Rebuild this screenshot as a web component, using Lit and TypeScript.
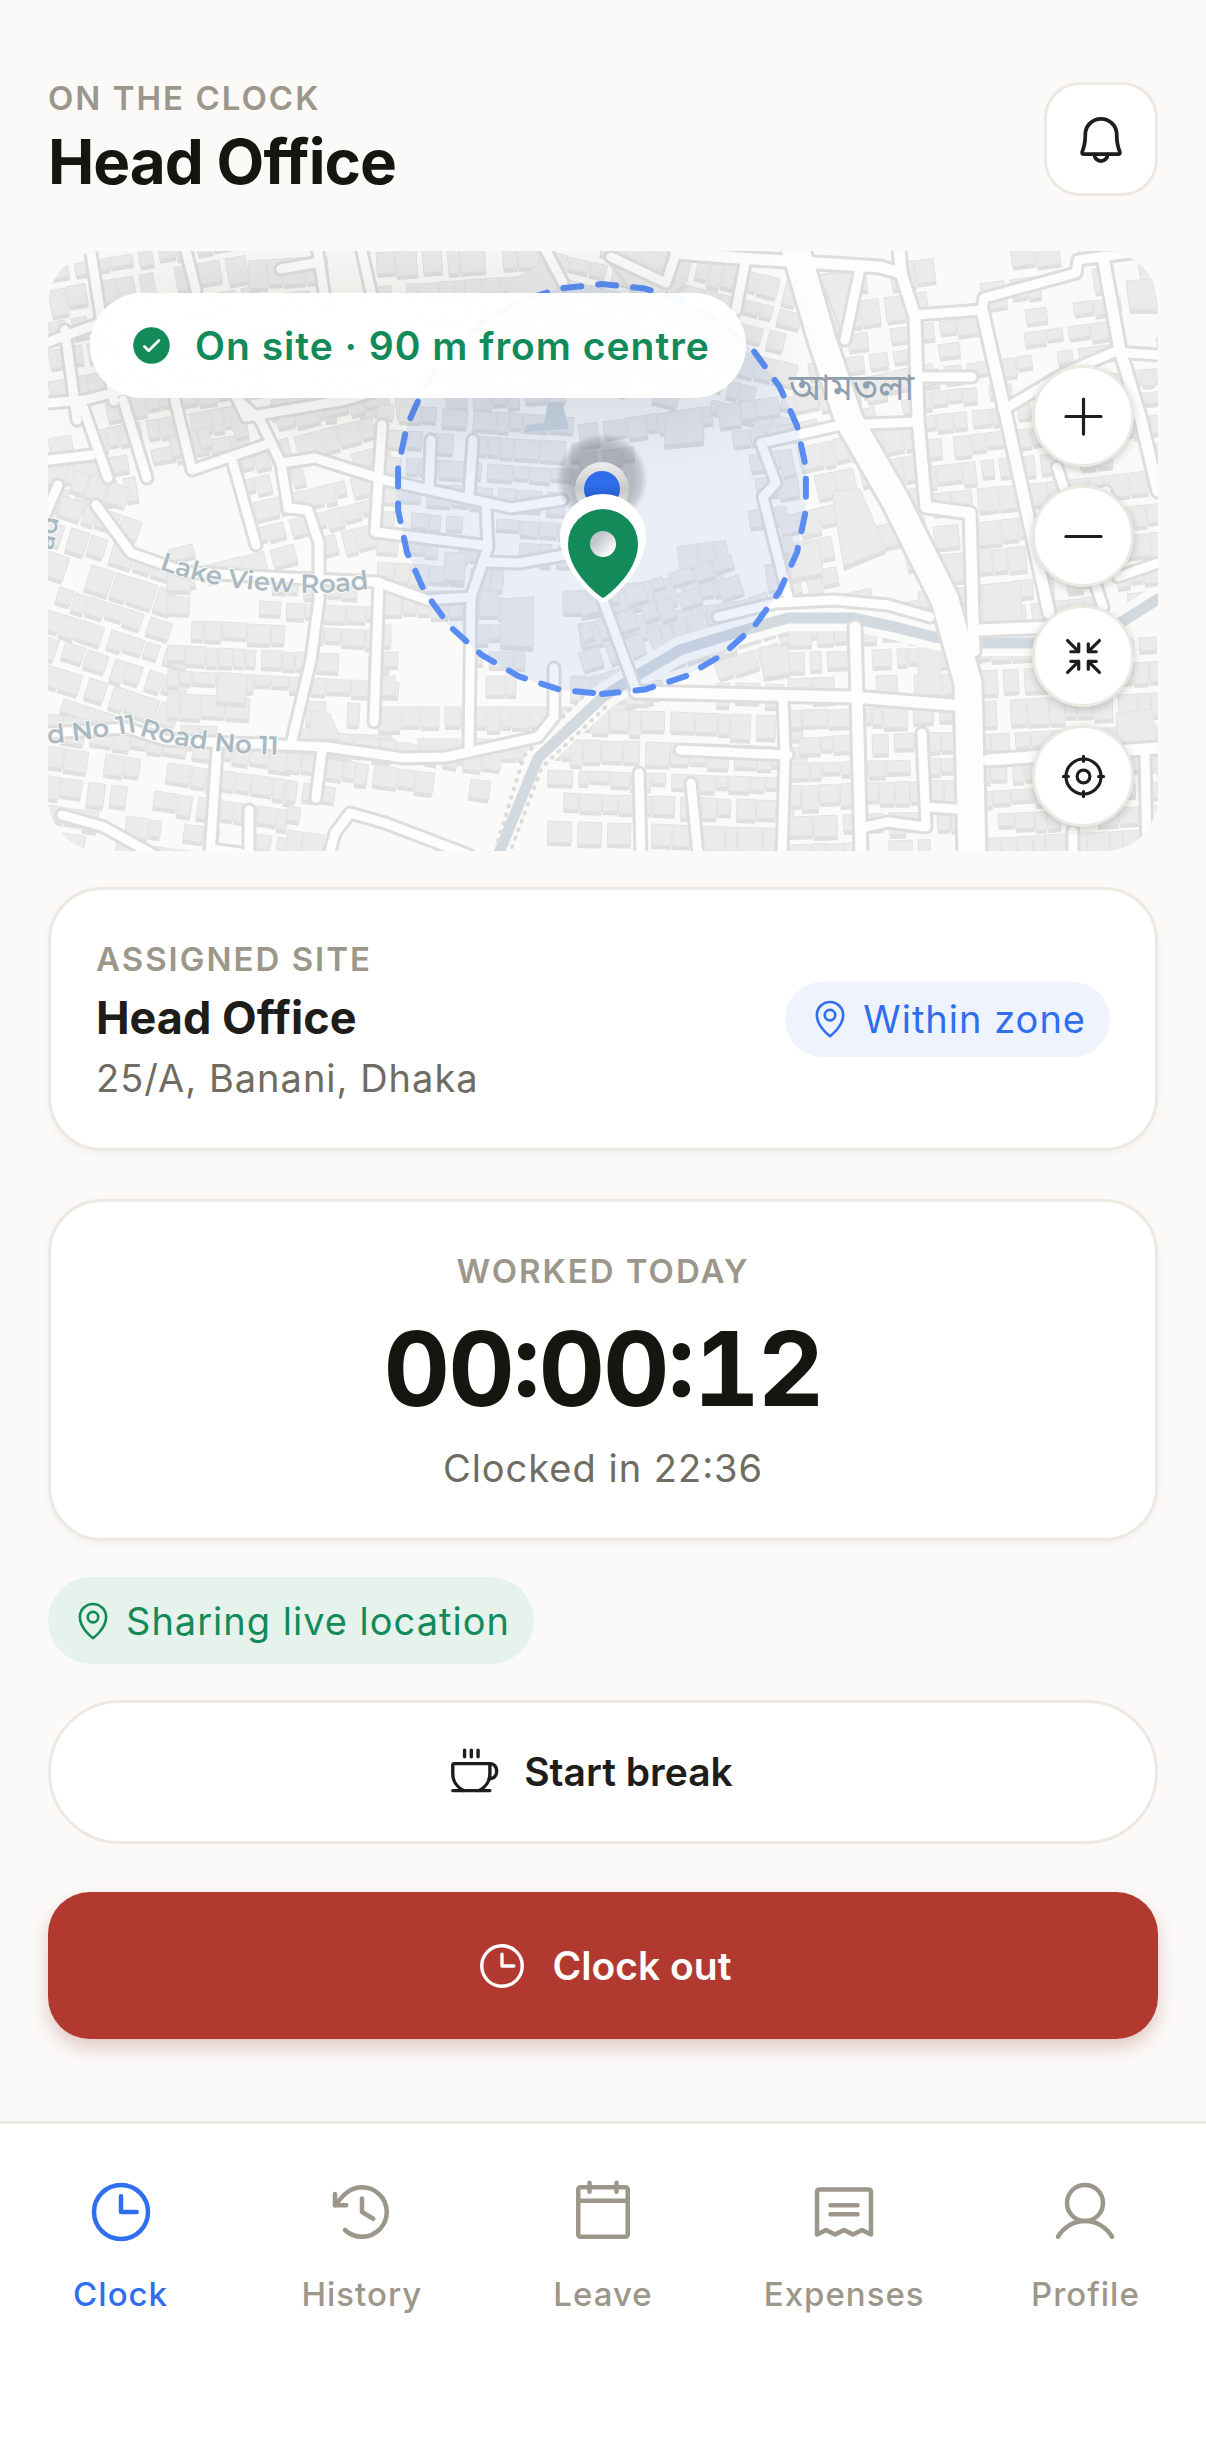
import { LitElement, html, css, svg, nothing } from 'lit'
import { customElement, property, state } from 'lit/decorators.js'
import { classMap } from 'lit/directives/class-map.js'

type IconName =
  | 'bell'
  | 'check'
  | 'plus'
  | 'minus'
  | 'arrows-in'
  | 'target'
  | 'pin'
  | 'cup'
  | 'clock'
  | 'history'
  | 'calendar'
  | 'receipt'
  | 'user'

// All glyphs are drawn on a 256 grid with a 16 unit stroke.
const ICONS: Record<IconName, unknown> = {
  bell: svg`
    <path d="M48 182 C55 166 61 146 61 109 A67 67 0 0 1 195 109 C195 146 201 166 208 182 Q211 193 201 193 H55 Q45 193 48 182 Z" />
    <path d="M100 194 a28 28 0 0 0 56 0" />
  `,
  check: svg`
    <circle cx="128" cy="128" r="104" fill="currentColor" stroke="none" />
    <path d="M88 134 L112 158 L170 100" stroke="#fff" />
  `,
  plus: svg`<path d="M40 128 H216 M128 40 V216" />`,
  minus: svg`<path d="M40 128 H216" />`,
  'arrows-in': svg`
    <path d="M192 104 H152 V64 M208 48 L152 104" />
    <path d="M64 152 H104 V192 M48 208 L104 152" />
    <path d="M152 192 V152 H192 M208 208 L152 152" />
    <path d="M104 64 V104 H64 M48 48 L104 104" />
  `,
  target: svg`
    <circle cx="128" cy="128" r="88" />
    <circle cx="128" cy="128" r="32" />
    <path d="M128 27 V52 M128 204 V229 M27 128 H52 M204 128 H229" />
  `,
  pin: svg`
    <circle cx="128" cy="104" r="32" />
    <path d="M208 104 C208 176 128 232 128 232 S48 176 48 104 a80 80 0 0 1 160 0 Z" />
  `,
  cup: svg`
    <path d="M88 24 V56 M120 24 V56 M152 24 V56 M32 216 H208" />
    <path d="M83.3 216 A88.2 88.2 0 0 1 32 136 V96 a8 8 0 0 1 8 -8 H208 V136 a88.2 88.2 0 0 1 -51.3 80" />
    <path d="M208 88 a32 32 0 0 1 32 32 v8 a32 32 0 0 1 -32 32 h-3.4" />
  `,
  clock: svg`
    <circle cx="128" cy="128" r="96" />
    <path d="M128 72 V128 H184" />
  `,
  history: svg`
    <path d="M128 80 V128 L168 152" />
    <path d="M72 104 H32 V64" />
    <path d="M67.6 192 A88 88 0 1 0 65.8 65.8 C54 77.7 44.3 88.9 32 104" />
  `,
  calendar: svg`
    <rect x="40" y="40" width="176" height="176" rx="8" />
    <path d="M176 24 V56 M80 24 V56 M40 88 H216" />
  `,
  receipt: svg`
    <path d="M80 104 H176 M80 136 H176" />
    <path d="M32 208 V56 a8 8 0 0 1 8 -8 H216 a8 8 0 0 1 8 8 V208 l-32 -16 -32 16 -32 -16 -32 16 -32 -16 Z" />
  `,
  user: svg`
    <circle cx="128" cy="96" r="64" />
    <path d="M32 216 C51.4 182.5 86.6 160 128 160 s76.6 22.5 96 56" />
  `,
}

@customElement('app-icon')
export class AppIcon extends LitElement {
  static override styles = css`
    :host {
      display: inline-flex;
      flex: none;
      width: 72px;
      height: 72px;
    }

    svg {
      width: 100%;
      height: 100%;
      fill: none;
      stroke: currentColor;
      stroke-width: 16;
      stroke-linecap: round;
      stroke-linejoin: round;
    }
  `

  @property() name: IconName = 'clock'

  override render() {
    return html`<svg viewBox="0 0 256 256" aria-hidden="true">${ICONS[this.name]}</svg>`
  }
}

const MAP_W = 1110
const MAP_H = 600

// Street centre lines, grouped by carriageway width.
const STREETS: Record<number, string[]> = {
  9: [
    '42,-4 53,66 66,150', '35,156 60,227', '17,79 29,169', '0,91 52,72', '0,152 37,149 110,130 210,112',
    '137,-4 148,39', '269,-4 279,60', '233,18 272,11', '313,-4 325,50', '496,-4 515,32',
    '75,149 99,227', '127,149 144,219 217,194', '190,149 198,166 298,149 380,124',
    '160,100 190,149 212,169 233,212 240,257 260,259 271,292 271,349 263,409 244,489',
    '185,212 208,294', '233,212 267,207 337,229 463,257 514,249', '334,174 327,281 433,294',
    '383,189 381,237', '425,189 421,245', '438,256 440,296 423,346 421,496', '437,311 471,312 517,304',
    '48,254 83,302 137,321 221,326 329,331 379,349 423,346', '331,331 326,471',
    '0,482 79,477 117,489 279,496 356,507 398,506 490,486 506,466 506,417',
    '169,499 162,604', '274,499 268,547', '201,559 201,604', '14,564 56,576 106,604', '162,598 192,602',
    '281,604 287,582 302,562 337,572 421,604', '0,209 44,204', '10,234 -2,262',
    '628,2 618,32 563,6', '697,12 688,59', '811,22 797,89',
    '868,64 934,59 936,47 1028,22 1030,9 1082,2 1110,2', '870,126 924,126',
    '955,159 1017,122 1066,101 1110,104', '793,174 713,192 728,232 715,246 740,346',
    '793,174 870,171', '670,366 728,352 786,349 840,354 882,366', '555,349 588,439',
    '735,449 737,502 734,604', '632,499 740,504', '591,522 593,604', '643,532 650,604',
    '874,482 878,576 840,571 817,576', '878,556 910,558', '1009,216 1055,356', '1070,326 1110,312',
    '1097,502 1099,604', '1025,580 1025,604', '1000,270 1015,252 1058,240 1064,260',
  ],
  11: [
    '628,2 690,7 832,16 853,22', '851,-4 853,22 867,66 870,169 878,256 922,262 926,400',
    '934,59 959,169 1001,362', '1055,6 1072,99 1093,169 1110,240', '588,441 805,446 905,454',
    '807,376 809,446 813,604', '932,379 1001,376', '940,509 1110,497',
  ],
  27: ['747,-4 774,89 801,169 847,249 897,349 920,432 924,604'],
}

const RIVER = '446,614 490,507 555,446 593,422 632,399 697,379 740,367 805,367 847,376 886,386 932,392 985,392 1072,372 1110,348'

// Unbuilt ground: x, y, width, height.
const OPEN_GROUND = [
  [100, 226, 84, 70], [150, 332, 60, 34], [216, 450, 26, 40], [290, 545, 120, 60], [356, 385, 60, 44],
  [280, 20, 34, 50], [590, 200, 110, 90], [620, 440, 30, 16], [478, 370, 44, 60], [470, 330, 40, 40],
  [936, 66, 30, 40], [890, 20, 34, 44], [1000, 40, 24, 30], [790, 300, 60, 40], [420, 555, 30, 45],
  [900, 0, 60, 20], [980, 120, 30, 30], [1080, 40, 24, 60], [560, 255, 50, 60], [690, 290, 24, 40],
]

const DISTRICTS = [
  [0, 0, 200, 230, -10], [200, 0, 300, 160, -4], [500, 0, 240, 160, 14], [760, 0, 350, 130, -8],
  [0, 230, 120, 250, 18], [120, 160, 210, 160, -14], [330, 160, 200, 190, 4], [530, 160, 200, 200, -8],
  [730, 130, 140, 240, -12], [870, 130, 240, 250, -6], [120, 320, 210, 170, 3], [330, 340, 200, 160, 0],
  [530, 320, 200, 120, -18], [0, 480, 240, 130, 8], [240, 490, 210, 120, 8], [500, 430, 240, 180, 2],
  [740, 370, 170, 240, -2], [930, 390, 190, 220, -3],
]

const LARGE_BUILDINGS = [
  '784,240 812,238 838,298 796,315', '553,-2 563,-2 640,30 600,60', '740,296 771,290 775,322 744,328',
  '455,35 495,12 520,38 480,62', '772,24 809,22 793,78', '934,334 973,330 974,376 935,378',
  '870,397 893,397 893,444 870,443', '1068,462 1104,458 1110,492 1070,495', '454,348 486,346 485,396 452,394',
  '1078,30 1104,28 1110,58 1082,58', '263,459 282,463 293,488 262,488', '618,162 654,156 656,190 616,194',
  '397,301 418,302 416,330 396,328', '170,421 200,424 197,452 168,450', '712,396 740,394 742,422 716,426',
]

interface Building {
  x: number
  y: number
  w: number
  h: number
  angle: number
}

function seeded(seed: number) {
  let s = seed
  return () => {
    s = (s * 16807) % 2147483647
    return s / 2147483647
  }
}

function layBuildings(): Building[] {
  const next = seeded(4711)
  const out: Building[] = []
  for (const [dx, dy, dw, dh, angle] of DISTRICTS) {
    let y = dy
    while (y < dy + dh) {
      const rowH = 16 + Math.round(next() * 12)
      let x = dx
      while (x < dx + dw) {
        const w = 10 + Math.round(next() * 15)
        const h = rowH - Math.round(next() * 7)
        const tilt = Math.tan((angle * Math.PI) / 180) * (x - dx - dw / 2)
        const by = Math.round(y + tilt)
        const open = OPEN_GROUND.some(([ox, oy, ow, oh]) => x + w > ox && x < ox + ow && by + h > oy && by < oy + oh)
        if (!open && next() > 0.1) out.push({ x, y: by, w, h, angle })
        x += w + (next() > 0.75 ? 6 : 1)
      }
      y += rowH + 6
    }
  }
  return out
}

const BUILDINGS = layBuildings()

function geofence(cx: number, cy: number, r: number, sides: number) {
  const points: string[] = []
  for (let i = 0; i < sides; i++) {
    const a = (i / sides) * Math.PI * 2 + Math.PI / 2
    points.push(`${(cx + r * Math.cos(a)).toFixed(1)},${(cy + r * Math.sin(a)).toFixed(1)}`)
  }
  return `M${points.join(' L')} Z`
}

const FENCE = geofence(554, 238, 205, 30)

@customElement('site-map')
export class SiteMap extends LitElement {
  static override styles = css`
    :host {
      display: block;
      position: relative;
      height: 600px;
      border-radius: 54px;
      overflow: hidden;
      background: #fafaf8;
    }

    .canvas {
      display: block;
      width: 100%;
      height: 100%;
    }

    .side { fill: #e0e0de; }
    .roof { fill: #ebebeb; stroke: #e3e3e2; stroke-width: 1; }

    .bank, .river, .casing, .street, .path {
      fill: none;
      stroke-linecap: round;
      stroke-linejoin: round;
    }

    .bank { stroke: #fafaf8; stroke-width: 26; }
    .river { stroke: #d2dadf; stroke-width: 11; }
    .path { stroke: #dcdcda; stroke-width: 4; stroke-dasharray: 1 8; }
    .casing { stroke: #dedede; }
    .street { stroke: #fdfdfd; }

    .label {
      font-family: Montserrat, 'Open Sans', 'Noto Sans', sans-serif;
      font-size: 26px;
      font-weight: 600;
      fill: #abb9c3;
      stroke: #fafaf8;
      stroke-width: 2;
      paint-order: stroke;
    }

    .place {
      font-family: 'Noto Sans Bengali', 'Noto Sans', sans-serif;
      font-size: 36px;
      font-weight: 400;
      fill: #8fa1af;
    }

    .fence {
      fill: rgba(47, 111, 237, 0.08);
      stroke: #5a8df3;
      stroke-width: 6;
      stroke-linecap: round;
      stroke-dasharray: 18 17;
      stroke-dashoffset: 26;
    }

    .status {
      position: absolute;
      top: 42px;
      left: 42px;
      display: flex;
      align-items: center;
      gap: 21px;
      height: 105px;
      padding: 0 36px 0 39px;
      border-radius: 53px;
      background: rgba(255, 255, 255, 0.96);
      box-shadow: 0 6px 96px rgba(22, 21, 15, 0.12);
      color: #138a5a;
      font-size: 39px;
      font-weight: 600;
      line-height: 48px;
      letter-spacing: 1px;
      white-space: nowrap;
    }

    .status app-icon {
      width: 45px;
      height: 45px;
    }

    .controls {
      position: absolute;
      right: 24px;
      bottom: 24px;
      display: flex;
      flex-direction: column;
      gap: 18px;
    }

    button {
      display: flex;
      align-items: center;
      justify-content: center;
      width: 102px;
      height: 102px;
      padding: 0;
      border: 3px solid #ebe9e2;
      border-radius: 50%;
      background: #fff;
      color: #1e1d19;
      box-shadow: 0 3px 8px rgba(22, 21, 15, 0.2);
      cursor: pointer;
    }

    button app-icon {
      width: 51px;
      height: 51px;
    }
  `

  @property() status = ''

  private _streets(kind: 'casing' | 'street') {
    return Object.entries(STREETS).map(([width, lines]) =>
      lines.map(
        (points) => svg`<polyline class=${kind} points=${points} stroke-width=${Number(width) + (kind === 'casing' ? 6 : 0)} />`,
      ),
    )
  }

  private _building(b: Building) {
    return svg`
      <g transform="rotate(${b.angle} ${b.x} ${b.y})">
        <rect class="side" x=${b.x} y=${b.y + 4} width=${b.w} height=${b.h} />
        <rect class="roof" x=${b.x} y=${b.y} width=${b.w} height=${b.h} />
      </g>
    `
  }

  override render() {
    return html`
      <svg class="canvas" viewBox="0 0 ${MAP_W} ${MAP_H}" preserveAspectRatio="xMidYMid slice" role="img" aria-label="Site map">
        <defs>
          <radialGradient id="halo">
            <stop offset="0.7" stop-color="#55565c" stop-opacity="0.34" />
            <stop offset="0.85" stop-color="#55565c" stop-opacity="0.24" />
            <stop offset="1" stop-color="#55565c" stop-opacity="0" />
          </radialGradient>
          <linearGradient id="ring" x1="0" y1="0" x2="0" y2="1">
            <stop offset="0" stop-color="#f1f1f1" />
            <stop offset="0.5" stop-color="#c9c9c9" />
            <stop offset="1" stop-color="#eeeeee" />
          </linearGradient>
          <linearGradient id="dot" x1="0" y1="0" x2="0" y2="1">
            <stop offset="0.35" stop-color="#2f6fed" />
            <stop offset="0.8" stop-color="#2759c2" />
          </linearGradient>
          <linearGradient id="hole" x1="0" y1="0" x2="1" y2="1">
            <stop offset="0.3" stop-color="#c3c6cc" />
            <stop offset="0.85" stop-color="#ffffff" />
          </linearGradient>
          <path id="lake-view" d="M111 318 C150 332 180 337 220 340 S290 343 334 336" />
          <path id="road-11-west" d="M0 493 C30 490 60 486 100 479" />
          <path id="road-11" d="M91 484 C125 496 180 504 250 504" />
          <path id="west-road" d="M5 300 L14 250" />
        </defs>

        ${BUILDINGS.map((b) => this._building(b))}
        ${LARGE_BUILDINGS.map(
          (points) => svg`
            <polygon class="side" points=${points} transform="translate(0 5)" />
            <polygon class="roof" points=${points} />
          `,
        )}
        <polygon points="500,151 514,151 521,178 476,181 478,174 496,172" fill="#cfd9df" />

        <polyline class="bank" points=${RIVER} />
        <polyline class="river" points=${RIVER} />
        <polyline class="path" points="450,590 476,505 540,440" />
        <polyline class="path" points="464,596 494,516 562,452" />
        ${this._streets('casing')} ${this._streets('street')}

        <text class="label"><textPath href="#lake-view">Lake View Road</textPath></text>
        <text class="label"><textPath href="#road-11-west">d No 11</textPath></text>
        <text class="label"><textPath href="#road-11">Road No 11</textPath></text>
        <text class="label"><textPath href="#west-road">ad</textPath></text>
        <text class="place" x="741" y="149">আমতলা</text>

        <path class="fence" d=${FENCE} />

        <circle cx="554" cy="228" r="46" fill="url(#halo)" />
        <circle cx="554" cy="238" r="27" fill="url(#ring)" />
        <circle cx="554" cy="238" r="18" fill="url(#dot)" />
        <path fill="#fff" d="M555 352 C543 347 512 316 512 286 A43 43 0 0 1 598 286 C598 316 567 347 555 352 Z" />
        <path fill="#138a5a" d="M555 347 C545 341 520 318 520 293 A35 35 0 0 1 590 293 C590 318 565 341 555 347 Z" />
        <circle cx="555" cy="293" r="13" fill="url(#hole)" />
      </svg>

      ${this.status
        ? html`<div class="status" role="status"><app-icon name="check"></app-icon><span>${this.status}</span></div>`
        : nothing}

      <div class="controls">
        <button type="button" aria-label="Zoom in"><app-icon name="plus"></app-icon></button>
        <button type="button" aria-label="Zoom out"><app-icon name="minus"></app-icon></button>
        <button type="button" aria-label="Fit site"><app-icon name="arrows-in"></app-icon></button>
        <button type="button" aria-label="My location"><app-icon name="target"></app-icon></button>
      </div>
    `
  }
}

interface Tab {
  id: string
  label: string
  icon: IconName
}

const TABS: Tab[] = [
  { id: 'clock', label: 'Clock', icon: 'clock' },
  { id: 'history', label: 'History', icon: 'history' },
  { id: 'leave', label: 'Leave', icon: 'calendar' },
  { id: 'expenses', label: 'Expenses', icon: 'receipt' },
  { id: 'profile', label: 'Profile', icon: 'user' },
]

@customElement('app-root')
export class AppRoot extends LitElement {
  static override styles = css`
    :host {
      display: flex;
      flex-direction: column;
      min-height: 100vh;
      background: #fbfaf8;
      color: #1e1d19;
      font-family: Inter, 'Noto Sans', sans-serif;
      font-size: 39px;
      line-height: 48px;
    }

    * {
      box-sizing: border-box;
    }

    h1, h2, p {
      margin: 0;
    }

    button {
      font: inherit;
      color: inherit;
      cursor: pointer;
    }

    main {
      flex: 1;
      display: flex;
      flex-direction: column;
      gap: 36px;
      padding: 75px 48px 81px;
    }

    header {
      display: flex;
      align-items: center;
      justify-content: space-between;
      margin-bottom: 12px;
    }

    .eyebrow {
      color: #9c978a;
      font-size: 33px;
      font-weight: 600;
      line-height: 46px;
      letter-spacing: 2px;
      text-transform: uppercase;
    }

    h1 {
      color: #16150f;
      font-size: 62px;
      font-weight: 700;
      line-height: 82px;
      letter-spacing: -1px;
    }

    .bell {
      display: flex;
      align-items: center;
      justify-content: center;
      width: 114px;
      height: 114px;
      padding: 0;
      border: 3px solid #ebe9e2;
      border-radius: 36px;
      background: #fff;
    }

    .bell app-icon {
      width: 60px;
      height: 60px;
    }

    .cards {
      display: flex;
      flex-direction: column;
      gap: 48px;
    }

    .card {
      padding: 46px 45px;
      border: 3px solid #ebe9e2;
      border-radius: 54px;
      background: #fff;
      box-shadow: 0 3px 9px rgba(22, 21, 15, 0.04);
    }

    .site {
      display: flex;
      align-items: center;
      justify-content: space-between;
    }

    .site-text {
      display: flex;
      flex-direction: column;
      gap: 7px;
    }

    h2 {
      font-size: 45px;
      font-weight: 700;
      line-height: 58px;
    }

    .meta {
      color: #706c62;
      font-size: 38px;
      letter-spacing: 1px;
      font-feature-settings: 'calt';
    }

    .worked {
      display: flex;
      flex-direction: column;
      align-items: center;
      gap: 13px;
    }

    .timer {
      color: #16150f;
      font-size: 103px;
      font-weight: 700;
      line-height: 124px;
      letter-spacing: -2px;
      font-feature-settings: 'tnum', 'calt', 'case';
    }

    .chip {
      display: flex;
      align-items: center;
      gap: 12px;
      height: 75px;
      padding: 0 24px;
      border-radius: 45px;
      font-size: 38px;
      letter-spacing: 1px;
    }

    .chip app-icon {
      width: 42px;
      height: 42px;
    }

    .chip.zone {
      background: #eef3fe;
      color: #2f6fed;
    }

    .chip.sharing {
      align-self: flex-start;
      height: 87px;
      background: #e6f3ec;
      color: #138a5a;
    }

    .action {
      display: flex;
      align-items: center;
      justify-content: center;
      gap: 24px;
      font-weight: 600;
    }

    .action app-icon {
      width: 54px;
      height: 54px;
    }

    .break {
      height: 144px;
      padding: 0 27px 0 0;
      border: 3px solid #ebe9e2;
      border-radius: 72px;
      background: #fff;
    }

    .clock-out {
      height: 147px;
      margin-top: 12px;
      border: none;
      border-radius: 42px;
      background: #b2392f;
      box-shadow: 0 9px 18px rgba(150, 40, 34, 0.24);
      color: #fff;
    }

    nav {
      display: grid;
      grid-template-columns: repeat(5, 1fr);
      padding: 52px 0 144px;
      border-top: 3px solid #ebe9e2;
      background: #fff;
    }

    nav a {
      display: flex;
      flex-direction: column;
      align-items: center;
      gap: 22px;
      color: #9c978a;
      font-size: 33px;
      font-weight: 500;
      letter-spacing: 1px;
      text-decoration: none;
    }

    nav a.active {
      color: #2f6fed;
    }
  `

  @state() private _tab = 'clock'

  private _select(e: MouseEvent, id: string) {
    e.preventDefault()
    this._tab = id
  }

  private _renderTab(tab: Tab) {
    const active = tab.id === this._tab
    return html`
      <a
        href="#${tab.id}"
        class=${classMap({ active })}
        aria-current=${active ? 'page' : nothing}
        @click=${(e: MouseEvent) => this._select(e, tab.id)}
      >
        <app-icon name=${tab.icon}></app-icon>
        <span>${tab.label}</span>
      </a>
    `
  }

  override render() {
    return html`
      <main>
        <header>
          <div>
            <p class="eyebrow">On the clock</p>
            <h1>Head Office</h1>
          </div>
          <button class="bell" type="button" aria-label="Notifications"><app-icon name="bell"></app-icon></button>
        </header>

        <site-map status="On site · 90 m from centre"></site-map>

        <div class="cards">
          <section class="card site">
            <div class="site-text">
              <p class="eyebrow">Assigned site</p>
              <h2>Head Office</h2>
              <p class="meta">25/A, Banani, Dhaka</p>
            </div>
            <div class="chip zone"><app-icon name="pin"></app-icon><span>Within zone</span></div>
          </section>

          <section class="card worked">
            <p class="eyebrow">Worked today</p>
            <p class="timer" role="timer">00:00:12</p>
            <p class="meta">Clocked in 22:36</p>
          </section>
        </div>

        <div class="chip sharing"><app-icon name="pin"></app-icon><span>Sharing live location</span></div>

        <button class="action break" type="button"><app-icon name="cup"></app-icon>Start break</button>
        <button class="action clock-out" type="button"><app-icon name="clock"></app-icon>Clock out</button>
      </main>

      <nav aria-label="Main">${TABS.map((tab) => this._renderTab(tab))}</nav>
    `
  }
}

declare global {
  interface HTMLElementTagNameMap {
    'app-icon': AppIcon
    'site-map': SiteMap
    'app-root': AppRoot
  }
}
